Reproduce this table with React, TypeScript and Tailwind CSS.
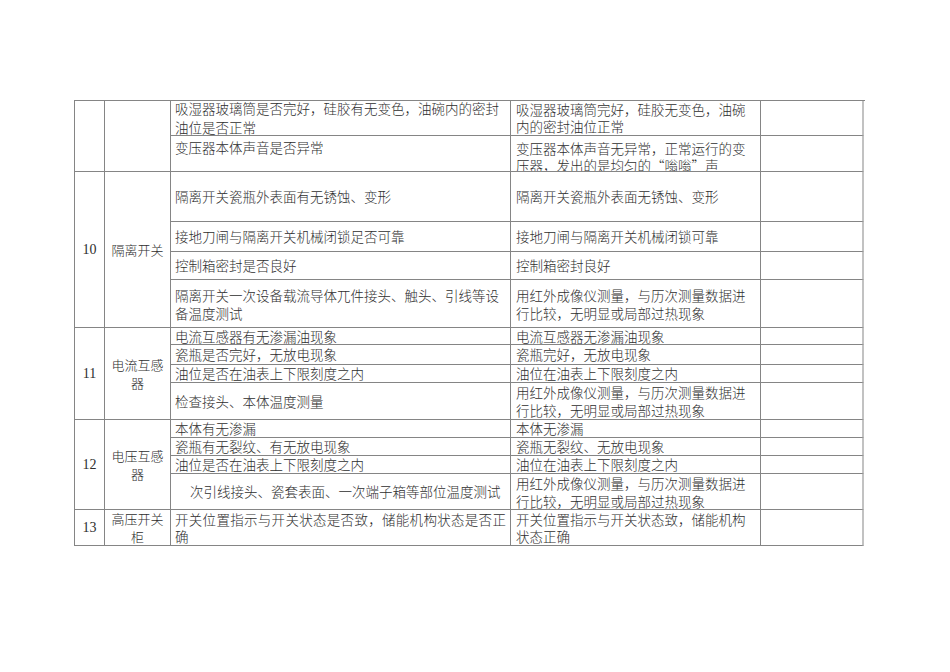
import clsx from "clsx";

type Line = string;

interface CheckRow {
  item: Line[];
  result: Line[];
  top?: boolean;
  itemClass?: string;
  resultClass?: string;
  firstLineClass?: string;
}

interface Group {
  no: string;
  name: Line[];
  span: string;
  rows: CheckRow[];
}

const groups: Group[] = [
  {
    no: "",
    name: [],
    span: "row-span-2",
    rows: [
      {
        item: ["吸湿器玻璃筒是否完好，硅胶有无变色，油碗内的密封", "油位是否正常"],
        result: ["吸湿器玻璃筒完好，硅胶无变色，油碗", "内的密封油位正常"],
        itemClass: "leading-[19px]",
      },
      {
        item: ["变压器本体声音是否异常"],
        result: ["变压器本体声音无异常，正常运行的变", "压器，发出的是均匀的“嗡嗡”声"],
        top: true,
        itemClass: "pt-[3px]",
        resultClass: "pt-[4px] leading-[16px]",
      },
    ],
  },
  {
    no: "10",
    name: ["隔离开关"],
    span: "row-span-4",
    rows: [
      { item: ["隔离开关瓷瓶外表面有无锈蚀、变形"], result: ["隔离开关瓷瓶外表面无锈蚀、变形"] },
      { item: ["接地刀闸与隔离开关机械闭锁足否可靠"], result: ["接地刀闸与隔离开关机械闭锁可靠"] },
      { item: ["控制箱密封是否良好"], result: ["控制箱密封良好"] },
      {
        item: ["隔离开关一次设备载流导体兀件接头、触头、引线等设", "备温度测试"],
        result: ["用红外成像仪测量，与历次测量数据进", "行比较，无明显或局部过热现象"],
        itemClass: "leading-[18px]",
        resultClass: "leading-[18px]",
      },
    ],
  },
  {
    no: "11",
    name: ["电流互感", "器"],
    span: "row-span-4",
    rows: [
      { item: ["电流互感器有无渗漏油现象"], result: ["电流互感器无渗漏油现象"] },
      { item: ["瓷瓶是否完好，无放电现象"], result: ["瓷瓶完好，无放电现象"] },
      { item: ["油位是否在油表上下限刻度之内"], result: ["油位在油表上下限刻度之内"] },
      {
        item: ["检查接头、本体温度测量"],
        result: ["用红外成像仪测量，与历次测量数据进", "行比较，无明显或局部过热现象"],
        resultClass: "leading-[18px]",
      },
    ],
  },
  {
    no: "12",
    name: ["电压互感", "器"],
    span: "row-span-4",
    rows: [
      { item: ["本体有无渗漏"], result: ["本体无渗漏"] },
      { item: ["瓷瓶有无裂纹、有无放电现象"], result: ["瓷瓶无裂纹、无放电现象"] },
      { item: ["油位是否在油表上下限刻度之内"], result: ["油位在油表上下限刻度之内"] },
      {
        item: ["次引线接头、瓷套表面、一次端子箱等部位温度测试"],
        result: ["用红外成像仪测量，与历次测量数据进", "行比较，无明显或局部过热现象"],
        itemClass: "pl-[19px]",
        resultClass: "leading-[18px]",
      },
    ],
  },
  {
    no: "13",
    name: ["高压开关", "柜"],
    span: "row-span-1",
    rows: [
      {
        item: ["开关位置指示与开关状态是否致，储能机构状态是否正", "确"],
        result: ["开关位置指示与开关状态致，储能机构", "状态正确"],
        firstLineClass: "tracking-[0.3px]",
      },
    ],
  },
];

function Cell({
  className,
  children,
}: {
  className?: string;
  children?: React.ReactNode;
}) {
  return (
    <div className={clsx("border-b border-r border-[#858585]", className)}>
      {children}
    </div>
  );
}

function Lines({ lines, first }: { lines: Line[]; first?: string }) {
  return (
    <>
      {lines.map((l, i) => (
        <span key={i} className={clsx("whitespace-nowrap", i === 0 && first)}>
          {l}
        </span>
      ))}
    </>
  );
}

export default function App() {
  return (
    <div className="min-h-[672px] w-[950px] bg-white pl-[74px] pt-[100px] text-[#2e2e2e] [font-family:'Noto_Sans_CJK_SC','Noto_Sans',sans-serif]">
      <div className="grid w-[791px] grid-cols-[30px_66px_340px_250px_103px] grid-rows-[35px_36px_50px_30px_28px_48px_17px_20px_18px_37px_18px_18px_18px_36px_36px] border-l border-t border-[#858585]">
        {groups.map((g, gi) => [
          <Cell
            key={`no-${gi}`}
            className={clsx(
              g.span,
              "flex items-center justify-center text-[14px] [font-family:'Liberation_Serif',serif]"
            )}
          >
            {g.no}
          </Cell>,
          <Cell
            key={`name-${gi}`}
            className={clsx(
              g.span,
              "flex flex-col items-center justify-center text-center text-[13px] leading-[18px] font-light"
            )}
          >
            <Lines lines={g.name} />
          </Cell>,
          ...g.rows.flatMap((r, ri) => [
            <Cell
              key={`item-${gi}-${ri}`}
              className={clsx(
                "flex flex-col pl-[4px] text-[13.5px] leading-[17px] font-light",
                r.top ? "justify-start overflow-hidden" : "justify-center",
                r.itemClass
              )}
            >
              <Lines lines={r.item} first={r.firstLineClass} />
            </Cell>,
            <Cell
              key={`res-${gi}-${ri}`}
              className={clsx(
                "flex flex-col pl-[5px] text-[13.5px] leading-[17px] font-light",
                r.top ? "justify-start overflow-hidden" : "justify-center",
                r.resultClass
              )}
            >
              <Lines lines={r.result} />
            </Cell>,
            <div
              key={`note-${gi}-${ri}`}
              className="border-b border-r-2 border-b-[#858585] border-r-[#c2c2c2]"
            />,
          ]),
        ])}
      </div>
    </div>
  );
}
